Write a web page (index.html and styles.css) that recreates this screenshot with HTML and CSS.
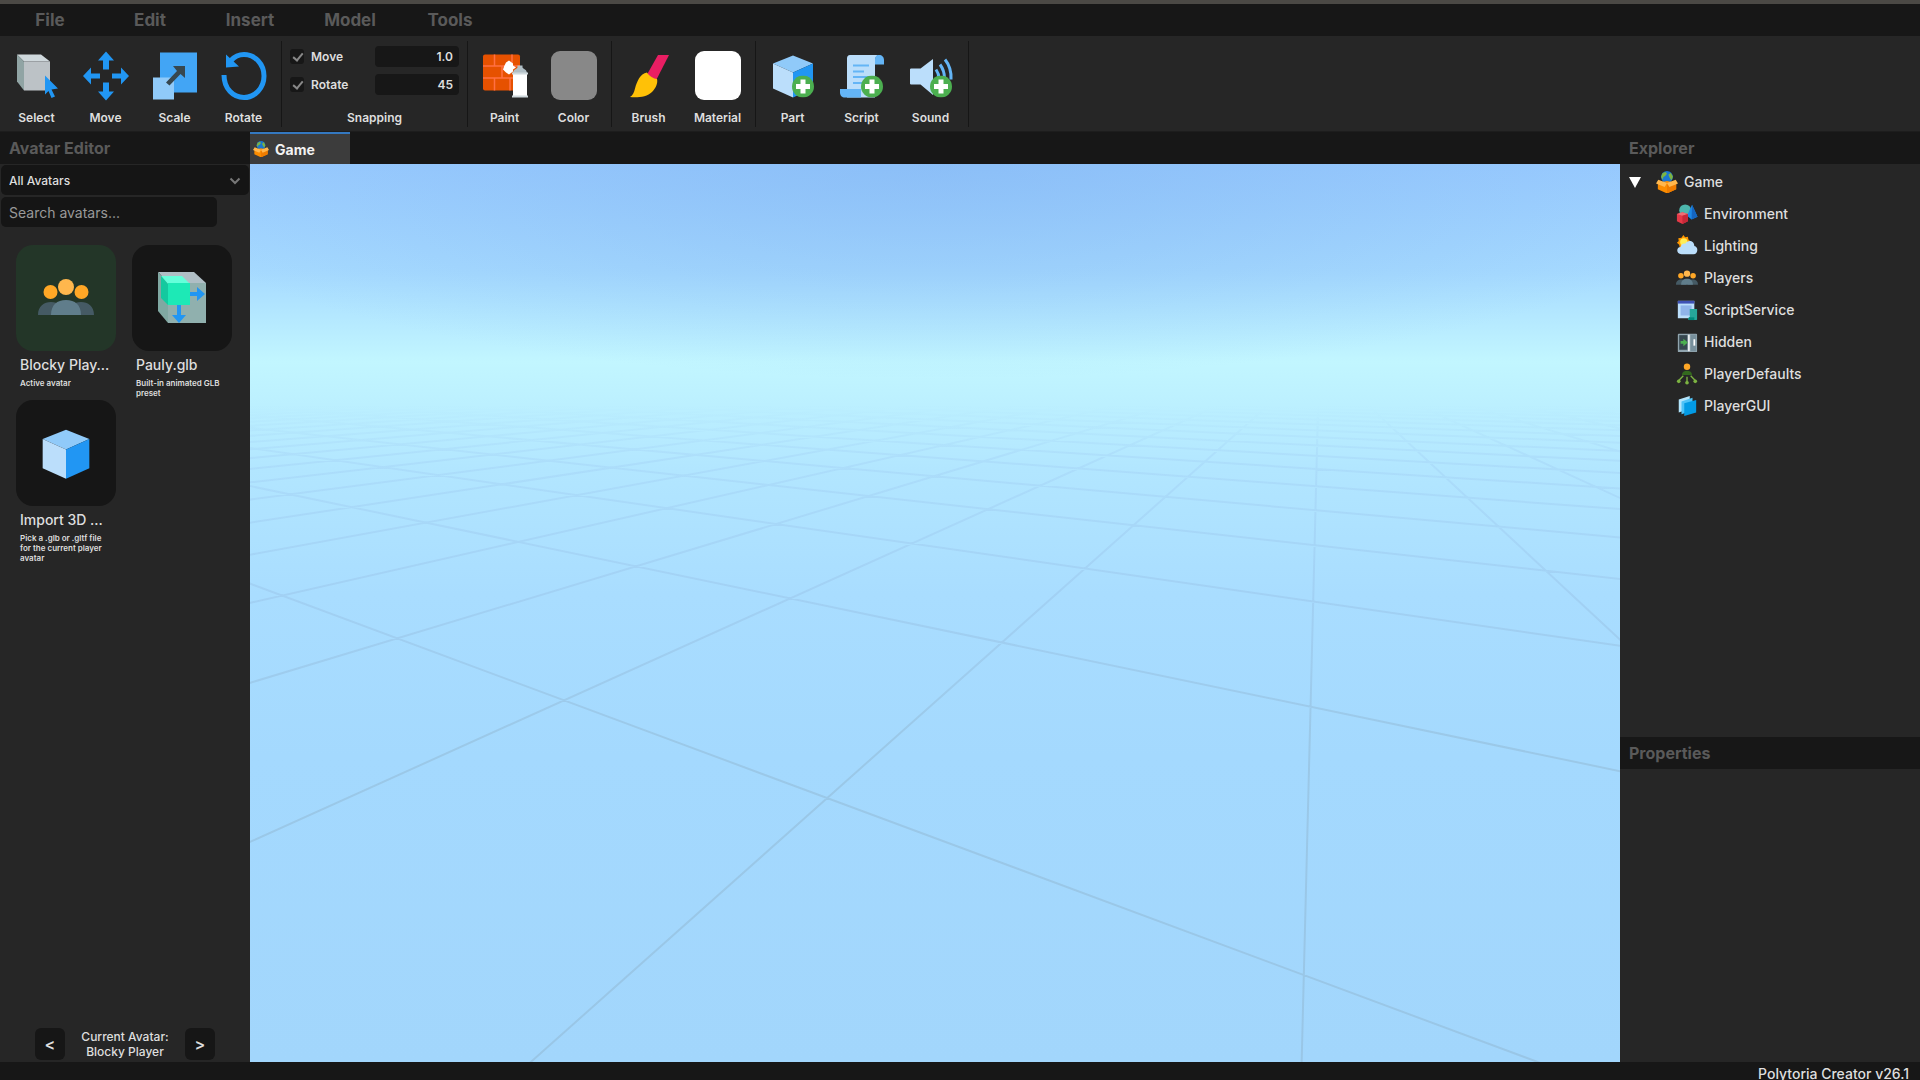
FILE: index.html
```html
<!DOCTYPE html>
<html lang="en">
<head>
    <meta charset="UTF-8">
    <meta name="viewport" content="width=device-width, initial-scale=1.0">
    <title>Polytoria Creator</title>
    <link rel="stylesheet" href="styles.css">
</head>
<body>
    <!-- shared icons -->
    <svg class="sprite" aria-hidden="true">
        <symbol id="icon-game" viewBox="0 0 24 24">
            <circle cx="12" cy="6.500" r="6.500" fill="#1976d2"/>
            <path d="M7 2.500l3.500-1.500 1.500 2-2 2.500-2 1-.5 3-2-3zM13.500 4l2.500-2 2.500 4-1.500 4-2-2.500z" fill="#7cb342"/>
            <path d="M2 13l10-2 10 2v7L12 24.500 2 20z" fill="#fb8c00"/>
            <path d="M12 15L22 13v7l-10 4.500z" fill="#ef7c00"/>
            <path d="M2.500 9.500L12 13l-2.500 4.500L0 13.500zM21.500 9.500L12 13l2.500 4.500L24 13.500z" fill="#ffb74d"/>
        </symbol>
        <symbol id="icon-people" viewBox="0 0 56 56">
            <circle cx="12.500" cy="22" r="7" fill="#ffa726"/>
            <circle cx="43.500" cy="22" r="7" fill="#ffa726"/>
            <path d="M0 45c0-9 6-13 13-13s13 4 13 13zM30 45c0-9 6-13 13-13s13 4 13 13z" fill="#455a64"/>
            <circle cx="28" cy="17" r="8" fill="#ffb74d"/>
            <path d="M13 45c0-10 6-15 15-15s15 5 15 15z" fill="#607d8b"/>
        </symbol>
        <symbol id="icon-cube" viewBox="0 0 48 48">
            <path d="M24 4L44 12 24 21 4 12z" fill="#90caf9"/>
            <path d="M4 12l20 9v25L4 37z" fill="#bbdefb"/>
            <path d="M44 12v25l-20 9V21z" fill="#2196f3"/>
        </symbol>
        <symbol id="icon-plus" viewBox="0 0 22 22">
            <circle cx="11" cy="11" r="11" fill="#4caf50"/>
            <path d="M8.500 4h5v4.500H18v5h-4.500V18h-5v-4.500H4v-5h4.500z" fill="#fff"/>
        </symbol>
    </svg>

    <header>
        <nav class="menu-bar">
            <button>File</button>
            <button>Edit</button>
            <button>Insert</button>
            <button>Model</button>
            <button>Tools</button>
        </nav>

        <div class="toolbar">
            <div class="tool-group">
                <button class="tool">
                    <svg viewBox="0 0 48 48">
                        <path d="M4 3h24l9 7H11z" fill="#cfd8dc"/>
                        <path d="M4 3l7 7v29l-7-9z" fill="#90a4a4"/>
                        <path d="M11 10h26v29H11z" fill="#bcc2c6"/>
                        <path d="M32 24l13 13-6.500 1 3.500 7-3.500 1.500-3-7-3.500 3.500z" fill="#2196f3"/>
                    </svg>
                    Select
                </button>
                <button class="tool">
                    <svg viewBox="0 0 48 48">
                        <path d="M24 0l8 9h-5v9h-6V9h-5zM24 49l8-9h-5v-9h-6v9h-5zM1 24.500l8-8.500v6h9v5H9v6zM47 24.500L39 16v6h-9v5h9v6z" fill="#2196f3"/>
                    </svg>
                    Move
                </button>
                <button class="tool">
                    <svg viewBox="0 0 48 48">
                        <path d="M9 1h37v40H9z" fill="#42a5f5"/>
                        <path d="M2 26h21v22H2z" fill="#90caf9"/>
                        <path d="M15 31l11-11.500-4-5H34v12l-4.500-4L18.500 34z" fill="#37474f"/>
                    </svg>
                    Scale
                </button>
                <button class="tool">
                    <svg viewBox="0 0 48 48">
                        <path d="M4 23.500C4 37 13 46 24 46s20-9.500 20-21.500S35 3 24 3c-5 0-9.500 2-13 6" fill="none" stroke="#2196f3" stroke-width="5"/>
                        <path d="M6 3v13l13-1z" fill="#2196f3"/>
                    </svg>
                    Rotate
                </button>
            </div>

            <div class="tool-group snap-group">
                <div class="snap-grid">
                    <label class="check"><input type="checkbox" checked>Move</label>
                    <input class="snap-value" type="text" value="1.0" aria-label="Move snapping">
                    <label class="check"><input type="checkbox" checked>Rotate</label>
                    <input class="snap-value" type="text" value="45" aria-label="Rotate snapping">
                </div>
                <span class="snap-title">Snapping</span>
            </div>

            <div class="tool-group">
                <button class="tool">
                    <svg viewBox="0 0 48 48">
                        <rect x="2" y="3" width="37" height="36" rx="2" fill="#e65100"/>
                        <path d="M2 14.500h37M2 26.500h37M13.500 3v11.500M31 3v11.500M21 14.500v12M13.500 26.500V39M29 26.500V39" stroke="#ff7043" stroke-width="1.500"/>
                        <path d="M28 9l4 3v2l3 2-3 2v2l-4 3-3-2-3-3 1-3 2-4z" fill="#fff"/>
                        <path d="M32 22c0-4 3-4 4.500-6v-2h5v2c1.500 2 4.500 2 4.500 6z" fill="#b0bec5"/>
                        <path d="M32 22h14v23H32z" fill="#fff"/>
                        <path d="M31 21h16v2H31zM31 44h16v2H31z" fill="#cfd8dc"/>
                    </svg>
                    Paint
                </button>
                <button class="tool">
                    <span class="swatch swatch-color"></span>
                    Color
                </button>
            </div>

            <div class="tool-group">
                <button class="tool">
                    <svg viewBox="0 0 48 48">
                        <path d="M33 3.500h11L31 29l-9-6z" fill="#e91e63"/>
                        <path d="M22 21c-7 1-10 9-12 16-1 4-2 6.500-5 8.500 7 1 17 0 22-5 4-4 6-9 5-13-3 0-8-3-10-6.500z" fill="#ffc107"/>
                    </svg>
                    Brush
                </button>
                <button class="tool">
                    <span class="swatch swatch-material"></span>
                    Material
                </button>
            </div>

            <div class="tool-group">
                <button class="tool">
                    <svg viewBox="0 0 48 48">
                        <use href="#icon-cube" width="48" height="48"/>
                        <use href="#icon-plus" x="23" y="24" width="22" height="22"/>
                    </svg>
                    Part
                </button>
                <button class="tool">
                    <svg viewBox="0 0 48 48">
                        <path d="M12 3.500h28c-2 1-3 3-3 6V46H9V7c0-2 1-3.500 3-3.500z" fill="#bbdefb"/>
                        <path d="M41 3.500c3 0 5 2 5 5V13h-9V8.500c0-3 1-5 4-5zM2 37.500h21V46H7c-3 0-5-2-5-5z" fill="#64b5f6"/>
                        <path d="M15 14h16M15 20h11M15 25.500h16M15 31.500h9" stroke="#64b5f6" stroke-width="2"/>
                        <use href="#icon-plus" x="23" y="24" width="22" height="22"/>
                    </svg>
                    Script
                </button>
                <button class="tool">
                    <svg viewBox="0 0 48 48">
                        <path d="M4 17h9.500L26 7.500v36L13.500 33H4c-1 0-1-1-1-1V18s0-1 1-1z" fill="#bbdefb"/>
                        <path d="M29 18c2 3 3 6 3 9M33 13c3 4 4.500 9 4.500 14M38 8c4 5 6.500 12 6 20" fill="none" stroke="#64b5f6" stroke-width="3"/>
                        <use href="#icon-plus" x="23" y="24" width="22" height="22"/>
                    </svg>
                    Sound
                </button>
            </div>
        </div>
    </header>

    <main class="workspace">
        <aside class="avatar-panel">
            <h2 class="panel-title">Avatar Editor</h2>
            <div class="filters">
                <div class="select-wrap">
                    <select aria-label="Avatar filter">
                        <option>All Avatars</option>
                    </select>
                    <svg class="chevron" viewBox="0 0 12 8"><path d="M1.500 1.500L6 6l4.500-4.500" fill="none" stroke="#777" stroke-width="2"/></svg>
                </div>
                <input class="search" type="text" placeholder="Search avatars..." aria-label="Search avatars">
            </div>

            <div class="avatar-grid">
                <button class="avatar">
                    <span class="thumb active"><svg viewBox="0 0 56 56"><use href="#icon-people"/></svg></span>
                    <span class="avatar-name">Blocky Play...</span>
                    <span class="avatar-note">Active avatar</span>
                </button>
                <button class="avatar">
                    <span class="thumb">
                        <svg viewBox="0 0 56 56">
                            <path d="M4 2h36l12 11H14z" fill="#b0bec5"/>
                            <path d="M4 2l10 11v40L4 41z" fill="#80a8a2"/>
                            <path d="M14 13h38v40H14z" fill="#90b0ae"/>
                            <path d="M7 6h21l8 8H14z" fill="#64ffda"/>
                            <path d="M7 6l7 8v21l-7-7z" fill="#14c99f"/>
                            <path d="M14 13h22v22H14z" fill="#1de9b6"/>
                            <path d="M36 22h7v-5l8 7-8 7v-5h-7zM23 35v10h-5l7 8 7-8h-5V35z" fill="#2196f3"/>
                        </svg>
                    </span>
                    <span class="avatar-name">Pauly.glb</span>
                    <span class="avatar-note">Built-in animated GLB preset</span>
                </button>
                <button class="avatar">
                    <span class="thumb"><svg viewBox="0 0 48 48"><use href="#icon-cube"/></svg></span>
                    <span class="avatar-name">Import 3D ...</span>
                    <span class="avatar-note">Pick a .glb or .gltf file for the current player avatar</span>
                </button>
            </div>

            <div class="pager">
                <button aria-label="Previous avatar">&lt;</button>
                <p>Current Avatar:<br>Blocky Player</p>
                <button aria-label="Next avatar">&gt;</button>
            </div>
        </aside>

        <section class="editor">
            <div class="tabs">
                <button class="tab"><svg viewBox="0 0 24 24"><use href="#icon-game"/></svg>Game</button>
            </div>
            <div class="viewport">
                <svg class="floor" viewBox="250 164 1370 898" preserveAspectRatio="none">
                    <defs>
                        <linearGradient id="floorFade" gradientUnits="userSpaceOnUse" x1="0" y1="405" x2="0" y2="740">
                            <stop offset="0" stop-color="#7fa8e8" stop-opacity="0"/>
                            <stop offset="0.15" stop-color="#86a8e4" stop-opacity="0.14"/>
                            <stop offset="0.5" stop-color="#84a0cc" stop-opacity="0.19"/>
                            <stop offset="1" stop-color="#7f98a8" stop-opacity="0.26"/>
                        </linearGradient>
                    </defs>
                    <path id="floorGrid" fill="none" stroke="url(#floorFade)" stroke-width="2"/>
                </svg>
            </div>
        </section>

        <aside class="side-panel">
            <section>
                <h2 class="panel-title">Explorer</h2>
                <ul class="tree">
                    <li class="root">
                        <svg class="arrow" viewBox="0 0 12 12"><path d="M0 1h12L6 12z" fill="#fff"/></svg>
                        <svg viewBox="0 0 24 24"><use href="#icon-game"/></svg>Game
                    </li>
                    <li>
                        <svg viewBox="0 0 24 24">
                            <circle cx="10" cy="8" r="6.500" fill="#4db6ac"/>
                            <path d="M17.500 2l6 13-6.500 3-5-4z" fill="#1e88e5"/>
                            <path d="M17.500 2l6 13-6.500 3z" fill="#1565c0"/>
                            <path d="M1 12l6-2 6 2v8l-6 3-6-3z" fill="#e53947"/>
                            <path d="M1 12l6-2 6 2-6 2z" fill="#ef6f75"/>
                            <path d="M7 14l6-2v8l-6 3z" fill="#c62838"/>
                        </svg>
                        Environment
                    </li>
                    <li>
                        <svg viewBox="0 0 24 24">
                            <path d="M8 0l2 2.500 3-.5.500 3 2.500 2-2 3 0 3H4l-.5-2.500L1 8.500l2-2L2.500 3.500l3.500-.5z" fill="#ff9800"/>
                            <circle cx="8.500" cy="7.500" r="4" fill="#ffee58"/>
                            <path d="M6 21c-6 0-6-8-1-8 1-3 3-4 5-3.500C13 4.500 20 6 20 12c5 1 4 9-1 9z" fill="#bbdefb"/>
                        </svg>
                        Lighting
                    </li>
                    <li><svg viewBox="0 0 56 56"><use href="#icon-people"/></svg>Players</li>
                    <li>
                        <svg viewBox="0 0 24 24">
                            <path d="M2 2h18v19H2z" fill="#bbdefb"/>
                            <path d="M2 2h18v3H2z" fill="#3f51b5"/>
                            <path d="M5 7h12v11H5z" fill="#90b4ea"/>
                            <path d="M15 11h8v11c0 1-1 1-2 1h-7c-1 0-1-3 1-3z" fill="#26a69a"/>
                            <path d="M14 20h6v3h-6z" fill="#00897b"/>
                        </svg>
                        ScriptService
                    </li>
                    <li>
                        <svg viewBox="0 0 24 24">
                            <rect x="2" y="3" width="21" height="20" rx="1" fill="#90a4ae"/>
                            <path d="M3.500 4.500h9v16h-9z" fill="#37474f"/>
                            <path d="M13 4h2v18h-2z" fill="#eceff1"/>
                            <path d="M16 4h6v18h-6z" fill="#78909c"/>
                            <path d="M20 9v7" stroke="#fff" stroke-width="2"/>
                            <path d="M5 11h3V8.500l5 4-5 4V14H5z" fill="#4caf50"/>
                        </svg>
                        Hidden
                    </li>
                    <li>
                        <svg viewBox="0 0 24 24">
                            <circle cx="12" cy="4" r="3.500" fill="#ffa726"/>
                            <path d="M6.500 13c0-3 2.500-4.500 5.500-4.500s5.500 1.500 5.500 4.500z" fill="#33691e"/>
                            <path d="M8 14l-5 5M12 15v6M16 14l5 5" stroke="#7cb342" stroke-width="1.500"/>
                            <circle cx="3" cy="20" r="2" fill="#7cb342"/>
                            <circle cx="12" cy="21.500" r="2" fill="#7cb342"/>
                            <circle cx="21" cy="20" r="2" fill="#7cb342"/>
                        </svg>
                        PlayerDefaults
                    </li>
                    <li>
                        <svg viewBox="0 0 24 24">
                            <path d="M3 5l12-4v14L3 19z" fill="#b3e5fc"/>
                            <path d="M6 7l12-4v14L6 21z" fill="#4fc3f7"/>
                            <path d="M9 9l13-3.500V19L9 23z" fill="#039be5"/>
                        </svg>
                        PlayerGUI
                    </li>
                </ul>
            </section>
            <section>
                <h2 class="panel-title">Properties</h2>
            </section>
        </aside>
    </main>

    <footer class="status-bar">Polytoria Creator v26.1</footer>

    <script>
        // projects a floor cell corner (i = columns, j = rows) on to the viewport
        function project(i, j) {
            const w = 0.4058 * i + 0.7735 * j + 1;
            const x = (-140.9 * i + 1020.4 * j + 1303.8) / w;
            const y = (146.8 * i + 278.4 * j + 975.1) / w;
            return x.toFixed(1) + " " + y.toFixed(1);
        }

        let d = "";
        for (let i = -30; i <= 60; i++) {
            const near = (0.3 - 1 - 0.4058 * i) / 0.7735;
            d += `M${project(i, near)}L${project(i, 60)}`;
        }
        for (let j = 0; j <= 30; j++) {
            const near = (0.3 - 1 - 0.7735 * j) / 0.4058;
            d += `M${project(near, j)}L${project(80, j)}`;
        }
        document.getElementById("floorGrid").setAttribute("d", d);
    </script>
</body>
</html>
```
FILE: styles.css
```css
* {
    box-sizing: border-box;
}
body {
    display: flex;
    flex-direction: column;
    height: 100vh;
    margin: 0;
    background: #262626;
    color: #dedede;
    font-family: Inter, sans-serif;
    font-size: 14px;
    overflow: hidden;
}
button, input, select {
    font: inherit;
    color: inherit;
    border: none;
    padding: 0;
    background: none;
}
.sprite {
    display: none;
}

/* menu */
.menu-bar {
    display: flex;
    border-top: 4px solid #4b4945;
    background: #171717;
}
.menu-bar button {
    width: 100px;
    height: 32px;
    color: #5a5a5a;
    font-size: 17px;
    font-weight: 700;
}

/* toolbar */
.toolbar {
    display: flex;
    height: 96px;
    padding: 5px 0 4px;
    border-bottom: 1px solid #1d1d1d;
}
.tool-group {
    display: flex;
    padding: 0 3px 0 2px;
    border-right: 1px solid #161616;
}
.tool {
    display: flex;
    flex-direction: column;
    align-items: center;
    width: 69px;
    padding-top: 10px;
    gap: 10px;
    font-size: 12px;
    font-weight: 600;
    line-height: 16px;
}
.tool svg {
    width: 48px;
    height: 49px;
    overflow: visible;
}
.swatch {
    width: 46px;
    height: 49px;
    border-radius: 9px;
}
.swatch-color {
    background: #888;
}
.swatch-material {
    background: #fff;
}
.snap-group {
    flex-direction: column;
    justify-content: space-between;
    width: 186px;
    padding: 5px 8px 1px;
    font-size: 12px;
    font-weight: 600;
}
.snap-grid {
    display: grid;
    grid-template-columns: 1fr 84px;
    gap: 7px 0;
}
.check {
    display: flex;
    align-items: center;
    gap: 7px;
}
.check input {
    appearance: none;
    width: 14px;
    height: 15px;
    margin: 0;
    border-radius: 3px;
    background: #171717;
}
.check input:checked::after {
    content: "";
    display: block;
    width: 4px;
    height: 8px;
    margin: 2px 5px;
    border: solid #888;
    border-width: 0 2px 2px 0;
    transform: rotate(40deg);
}
.snap-value {
    width: 84px;
    height: 21px;
    padding: 0 6px;
    border-radius: 4px;
    background: #171717;
    text-align: right;
}
.snap-title {
    line-height: 16px;
    text-align: center;
}

/* workspace */
.workspace {
    flex: 1;
    display: grid;
    grid-template-columns: 250px 1fr 300px;
    min-height: 0;
}
.panel-title {
    margin: 0;
    padding: 0 9px;
    background: #171717;
    color: #5a5a5a;
    font-size: 16px;
    font-weight: 700;
    line-height: 32px;
}
.avatar-panel {
    display: flex;
    flex-direction: column;
}
.filters {
    display: grid;
    gap: 2px;
    padding: 1px;
}
.select-wrap {
    position: relative;
}
.select-wrap select {
    appearance: none;
    width: 100%;
    height: 30px;
    padding: 0 8px;
    border-radius: 5px;
    background: #151515;
    font-size: 12px;
    font-weight: 500;
}
.chevron {
    position: absolute;
    right: 8px;
    top: 12px;
    width: 12px;
    height: 8px;
}
.search {
    width: 216px;
    height: 30px;
    padding: 0 8px;
    border-radius: 5px;
    background: #151515;
}
.search::placeholder {
    color: #999;
}
.avatar-grid {
    flex: 1;
    display: grid;
    grid-template-columns: 100px 100px;
    grid-auto-rows: 155px;
    gap: 0 16px;
    padding: 17px 16px;
}
.avatar {
    display: flex;
    flex-direction: column;
    text-align: left;
}
.thumb {
    flex-shrink: 0;
    display: flex;
    align-items: center;
    justify-content: center;
    width: 100px;
    height: 106px;
    border-radius: 17px;
    background: #161616;
}
.thumb.active {
    background: #233628;
}
.thumb svg {
    width: 56px;
    height: 56px;
}
.avatar-name {
    padding: 4px 4px 0;
    font-weight: 500;
    line-height: 20px;
}
.avatar-note {
    padding: 3px 4px;
    font-size: 8px;
    font-weight: 600;
    line-height: 10px;
}
.pager {
    display: flex;
    justify-content: center;
    align-items: center;
    gap: 11px;
    padding: 0 0 2px;
}
.pager button {
    width: 30px;
    height: 32px;
    border-radius: 6px;
    background: #161616;
    font-size: 16px;
    font-weight: 600;
}
.pager p {
    width: 98px;
    margin: 0;
    font-size: 12px;
    font-weight: 500;
    line-height: 15px;
    text-align: center;
    white-space: nowrap;
}

/* editor */
.editor {
    display: flex;
    flex-direction: column;
}
.tabs {
    display: flex;
    height: 32px;
    background: #171717;
}
.tab {
    display: flex;
    align-items: center;
    gap: 6px;
    width: 100px;
    padding: 0 3px;
    border-top: 2px solid #3478c0;
    background: #3c3c3c;
    color: #f2f2f2;
    font-weight: 700;
}
.tab svg {
    width: 16px;
    height: 16px;
}
.viewport {
    flex: 1;
    min-height: 0;
    background:
        radial-gradient(ellipse 60% 24% at 50% 0, rgba(126, 178, 240, 0.5), rgba(126, 178, 240, 0)),
        linear-gradient(#99cbff, #a6daff 12%, #c2f6ff 22%, #bdf1ff 26%, #b2e6ff 34%, #a9ddff 48%, #a4d9fe 66%, #a2d6fc);
}
.floor {
    display: block;
    width: 100%;
    height: 100%;
}

/* explorer */
.side-panel {
    display: grid;
    grid-template-rows: 65fr 35fr;
}
.tree {
    margin: 0;
    padding: 2px 0;
    list-style: none;
    font-weight: 500;
    line-height: 32px;
}
.tree li {
    display: flex;
    align-items: center;
    gap: 6px;
    padding-left: 56px;
}
.tree svg {
    width: 22px;
    height: 22px;
}
.tree .root {
    padding-left: 9px;
}
.tree .root .arrow {
    width: 12px;
    height: 12px;
    margin-right: 9px;
}

.status-bar {
    height: 18px;
    padding: 3px 11px 0;
    background: #171717;
    font-weight: 500;
    line-height: 18px;
    text-align: right;
    overflow: hidden;
}
```
